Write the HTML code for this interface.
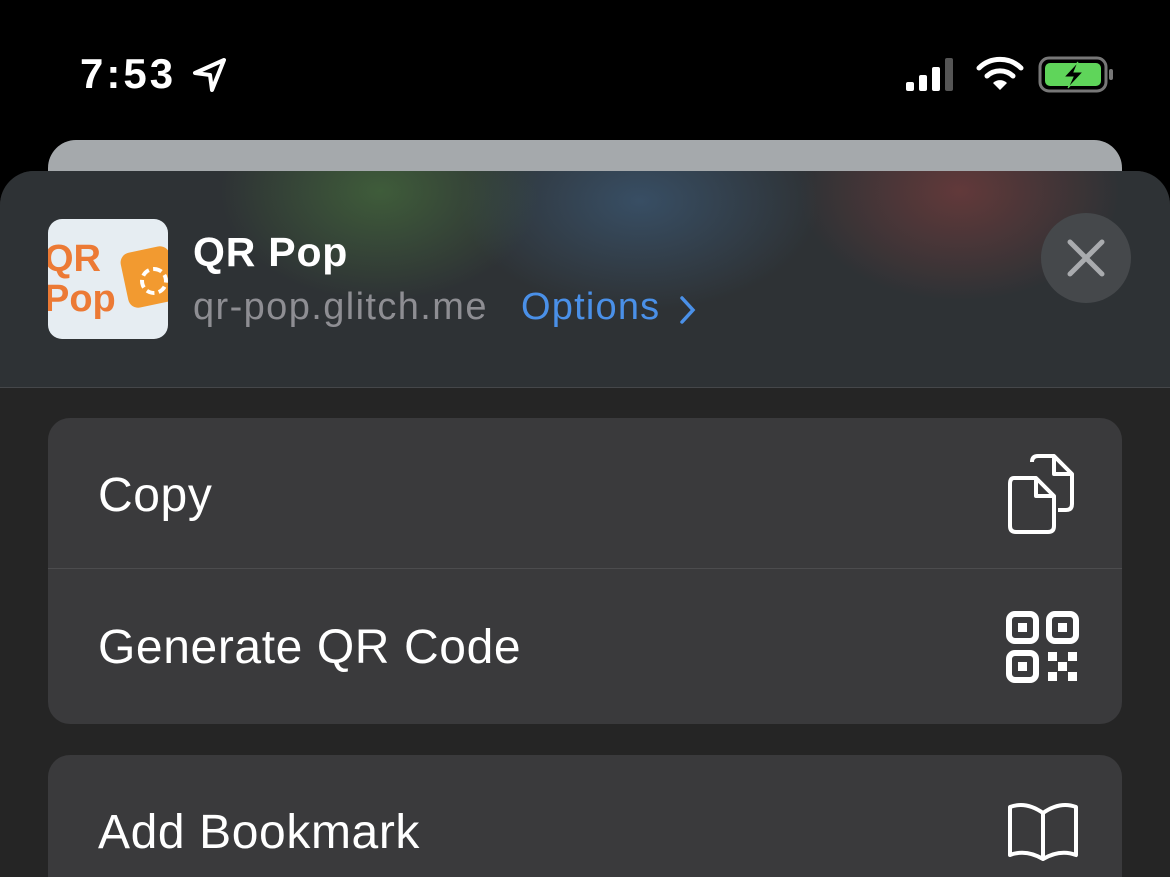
<!DOCTYPE html>
<html style="overflow:hidden;width:1170px;height:877px"><head><style>
html,body{margin:0;width:1170px;height:877px;overflow:hidden}
body{background:#000;position:relative;font-family:"Liberation Sans",sans-serif;color:#fff}
.abs{position:absolute}
.card{left:48px;top:140px;width:1074px;height:80px;background:#a5a9ac;border-radius:28px}
.sheet{left:0;top:171px;width:1170px;height:706px;background:#252525;border-radius:34px 34px 0 0;overflow:hidden}
.hdr{left:0;top:0;width:1170px;height:216px;background:radial-gradient(ellipse 160px 110px at 380px 20px,rgba(70,110,60,.7),transparent),radial-gradient(ellipse 180px 110px at 640px 30px,rgba(60,90,120,.7),transparent),radial-gradient(ellipse 160px 110px at 960px 20px,rgba(120,60,60,.7),transparent),#2e3235;border-bottom:1px solid #45474a}
.grp{left:48px;width:1074px;background:#3a3a3c;border-radius:22px;overflow:hidden}
.row{position:absolute;left:50px;font-size:48px;letter-spacing:0.6px}
</style></head><body>
<div class="abs" style="left:80px;top:50px;font-size:42px;font-weight:600;letter-spacing:3px">7:53</div>
<svg class="abs" style="left:192px;top:57px" width="36" height="36" viewBox="0 0 36 36"><path d="M32 3 L3 16 L18 18 L20 33 Z" fill="none" stroke="#fff" stroke-width="4" stroke-linejoin="round"/></svg>
<svg class="abs" style="left:906px;top:56px" width="50" height="36"><rect x="0" y="26" width="8" height="9" rx="2" fill="#fff"/><rect x="13" y="19" width="8" height="16" rx="2" fill="#fff"/><rect x="26" y="11" width="8" height="24" rx="2" fill="#fff"/><rect x="39" y="2" width="8" height="33" rx="2" fill="#555"/></svg>
<svg class="abs" style="left:976px;top:56px" width="48" height="36" viewBox="0 0 48 36"><path d="M3 12 A30 30 0 0 1 45 12" fill="none" stroke="#fff" stroke-width="5" stroke-linecap="round"/><path d="M11 20 A19 19 0 0 1 37 20" fill="none" stroke="#fff" stroke-width="5" stroke-linecap="round"/><path d="M24 34 L17 27 A10 10 0 0 1 31 27 Z" fill="#fff"/></svg>
<svg class="abs" style="left:1038px;top:56px" width="80" height="38"><rect x="2" y="2" width="66" height="33" rx="9" fill="none" stroke="#777" stroke-width="3"/><rect x="7" y="7" width="56" height="23" rx="5" fill="#5fd55a"/><rect x="71" y="13" width="4" height="11" rx="2" fill="#777"/><path d="M40 6 L26 21 L35 21 L30 32 L45 16 L36 16 Z" fill="#000" stroke="#5fd55a" stroke-width="1"/></svg>
<div class="abs card"></div>
<div class="abs sheet">
 <div class="abs hdr">
  <div class="abs" style="left:48px;top:48px;width:120px;height:120px;border-radius:14px;background:#e6edf2;overflow:hidden">
   <div class="abs" style="left:-4px;top:20px;font-size:38px;font-weight:900;color:#ec7a35;line-height:40px">QR<br>Pop</div>
   <div class="abs" style="left:76px;top:30px;width:50px;height:56px;border-radius:10px;background:#f29a30;transform:rotate(-12deg)"></div>
   <div class="abs" style="left:92px;top:48px;width:20px;height:20px;border-radius:50%;border:4px dashed #fff"></div>
  </div>
  <div class="abs" style="left:193px;top:58px;font-size:41px;font-weight:600;letter-spacing:0.8px">QR Pop</div>
  <div class="abs" style="left:193px;top:115px;font-size:38px;letter-spacing:1.4px;color:#8e8e93">qr-pop.glitch.me</div>
  <div class="abs" style="left:521px;top:115px;font-size:38px;letter-spacing:1.2px;color:#4a90e8">Options</div>
  <svg class="abs" style="left:678px;top:124px" width="20" height="30"><path d="M4 3 L15 15 L4 27" fill="none" stroke="#4a90e8" stroke-width="3.5" stroke-linecap="round"/></svg>
  <div class="abs" style="left:1041px;top:42px;width:90px;height:90px;border-radius:50%;background:#45484b"></div>
  <svg class="abs" style="left:1066px;top:67px" width="40" height="40"><path d="M4 4 L36 36 M36 4 L4 36" stroke="#a9abae" stroke-width="5" stroke-linecap="round"/></svg>
 </div>
</div>
<div class="abs grp" style="top:418px;height:306px">
 <div class="row" style="top:50px">Copy</div>
 <div class="abs" style="left:0;top:150px;width:1074px;height:1px;background:#4c4c4e"></div>
 <div class="row" style="top:202px">Generate QR Code</div>
 <svg class="abs" style="left:958px;top:34px" width="72" height="84" viewBox="0 0 72 84"><path d="M26 10 Q26 4 32 4 L48 4 L66 22 L66 52 Q66 58 60 58 L52 58" fill="none" stroke="#fff" stroke-width="4" stroke-linejoin="round"/><path d="M48 4 L48 22 L66 22" fill="none" stroke="#fff" stroke-width="4" stroke-linejoin="round"/><path d="M8 26 Q4 26 4 32 L4 74 Q4 80 10 80 L42 80 Q48 80 48 74 L48 44 L30 26 Z" fill="#3a3a3c" stroke="#fff" stroke-width="4" stroke-linejoin="round"/><path d="M30 26 L30 44 L48 44" fill="none" stroke="#fff" stroke-width="4" stroke-linejoin="round"/></svg>
 <svg class="abs" style="left:958px;top:193px" width="74" height="72" viewBox="0 0 74 72"><g fill="none" stroke="#fff" stroke-width="6"><rect x="3" y="3" width="27" height="27" rx="6"/><rect x="43" y="3" width="27" height="27" rx="6"/><rect x="3" y="42" width="27" height="27" rx="6"/></g><g fill="#fff"><rect x="12" y="12" width="9" height="9"/><rect x="52" y="12" width="9" height="9"/><rect x="12" y="51" width="9" height="9"/><rect x="42" y="41" width="9" height="9"/><rect x="62" y="41" width="9" height="9"/><rect x="52" y="51" width="9" height="9"/><rect x="42" y="61" width="9" height="9"/><rect x="62" y="61" width="9" height="9"/></g></svg>
</div>
<div class="abs grp" style="top:755px;height:122px;border-radius:22px 22px 0 0">
 <div class="row" style="top:50px">Add Bookmark</div>
 <svg class="abs" style="left:958px;top:46px" width="74" height="62" viewBox="0 0 74 62"><path d="M37 12 Q20 0 4 6 L4 54 Q20 48 37 58 Q54 48 70 54 L70 6 Q54 0 37 12 Z M37 12 L37 58" fill="none" stroke="#fff" stroke-width="4" stroke-linejoin="round"/></svg>
</div>
</body></html>
